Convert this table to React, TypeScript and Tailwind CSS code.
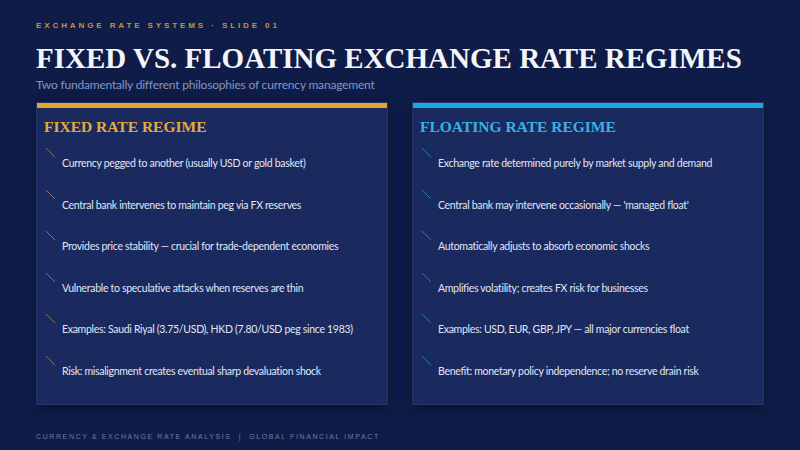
import React from "react";

const fixedItems = [
  "Currency pegged to another (usually USD or gold basket)",
  "Central bank intervenes to maintain peg via FX reserves",
  "Provides price stability — crucial for trade-dependent economies",
  "Vulnerable to speculative attacks when reserves are thin",
  "Examples: Saudi Riyal (3.75/USD), HKD (7.80/USD peg since 1983)",
  "Risk: misalignment creates eventual sharp devaluation shock",
];

const floatingItems = [
  "Exchange rate determined purely by market supply and demand",
  "Central bank may intervene occasionally — 'managed float'",
  "Automatically adjusts to absorb economic shocks",
  "Amplifies volatility; creates FX risk for businesses",
  "Examples: USD, EUR, GBP, JPY — all major currencies float",
  "Benefit: monetary policy independence; no reserve drain risk",
];

const Panel: React.FC<{
  title: string;
  items: string[];
  variant: "gold" | "cyan";
}> = ({ title, items, variant }) => {
  const gold = variant === "gold";
  return (
    <div className="flex flex-col bg-[#1a2a5f] border border-white/5 shadow-[0_4px_12px_rgba(0,0,0,0.35)]">
      <div className={gold ? "h-[5px] bg-[#e3a42a]" : "h-[5px] bg-[#1ca8e3]"} />
      <div className="px-[7px] pt-[9px]">
        <h2
          className={
            gold
              ? "font-['Liberation_Serif',serif] font-bold text-[15.5px] leading-[20px] text-[#e5aa3a]"
              : "font-['Liberation_Serif',serif] font-bold text-[15.5px] leading-[20px] text-[#3cb0e0]"
          }
        >
          {title}
        </h2>
      </div>
      <ul className="flex flex-col pl-[8px] pt-[10px]">
        {items.map((t, i) => (
          <li key={i} className="flex h-[41.6px]">
            <svg width="12" height="12" viewBox="0 0 12 12" className="shrink-0">
              <line
                x1="1"
                y1="1"
                x2="10"
                y2="10"
                stroke={gold ? "#8a8068" : "#2f7fae"}
                strokeWidth="1"
                opacity="0.9"
              />
            </svg>
            <span className="pl-[5px] pt-[9px] text-[10.5px] leading-[14px] tracking-[-0.3px] whitespace-nowrap text-[#e0e6f5] font-['Lato',sans-serif]">
              {t}
            </span>
          </li>
        ))}
      </ul>
    </div>
  );
};

export default function App() {
  return (
    <div className="w-[800px] h-[450px] overflow-hidden bg-[#0f1c48] flex flex-col px-[36px] pt-[20px]">
      <div className="text-[8px] leading-[12px] tracking-[2.9px] font-bold text-[#c9952c] font-['Liberation_Sans',sans-serif]">
        EXCHANGE RATE SYSTEMS · SLIDE 01
      </div>
      <h1 className="mt-[9px] whitespace-nowrap font-['Liberation_Serif',serif] font-bold text-[29px] leading-[34px] text-[#f4f5f9]">
        FIXED VS. FLOATING EXCHANGE RATE REGIMES
      </h1>
      <p className="mt-[2px] text-[12px] leading-[16px] tracking-[-0.2px] text-[#8795c0] font-['Lato',sans-serif]">
        Two fundamentally different philosophies of currency management
      </p>
      <div className="mt-[9px] grid grid-cols-2 gap-[24px] h-[303px] shrink-0">
        <Panel title="FIXED RATE REGIME" items={fixedItems} variant="gold" />
        <Panel title="FLOATING RATE REGIME" items={floatingItems} variant="cyan" />
      </div>
      <div className="mt-[27px] whitespace-nowrap text-[7px] leading-[10px] tracking-[1.6px] text-[#6e7ba8] font-['Liberation_Sans',sans-serif]">
        CURRENCY &amp; EXCHANGE RATE ANALYSIS &nbsp;|&nbsp; GLOBAL FINANCIAL IMPACT
      </div>
    </div>
  );
}
